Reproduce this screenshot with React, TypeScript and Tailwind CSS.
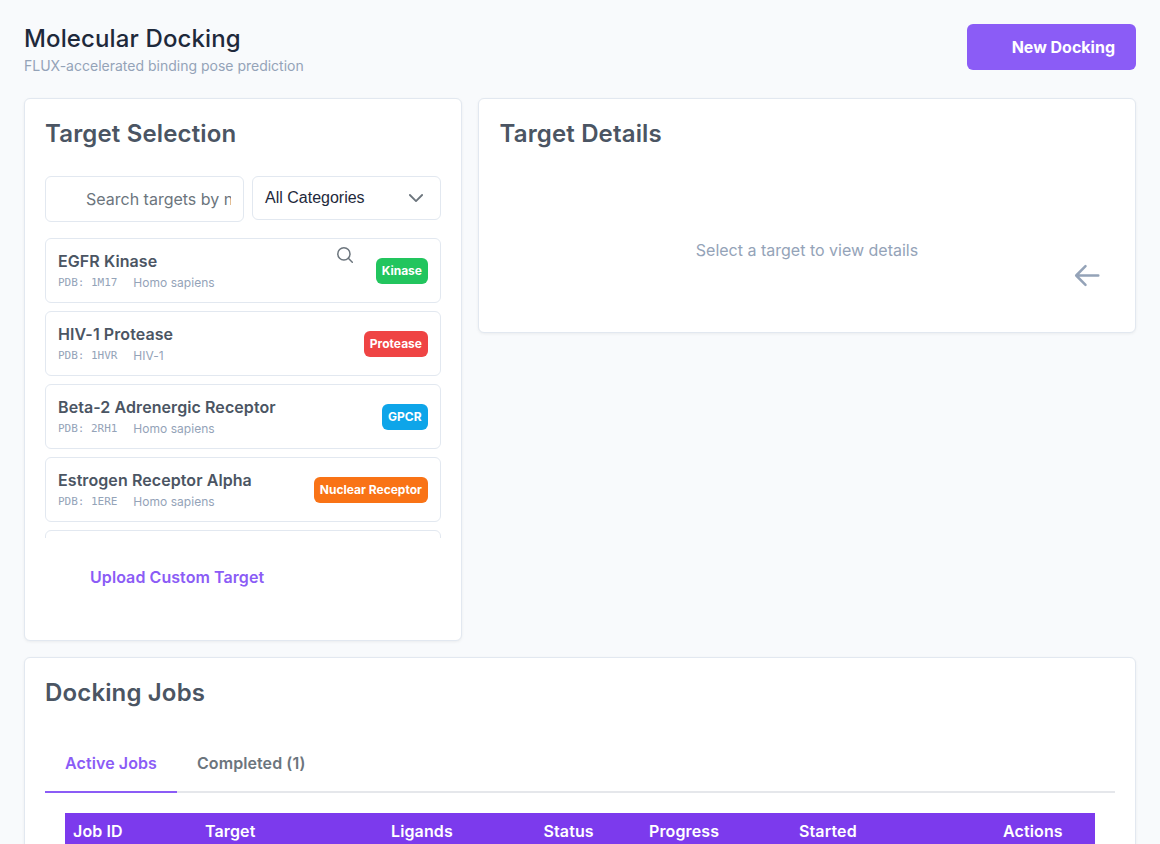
interface Target {
  name: string;
  pdb: string;
  organism: string;
  category: string;
  color: string;
}

interface Column {
  label: string;
  width: string;
}

const targets: Target[] = [
  { name: 'EGFR Kinase', pdb: '1M17', organism: 'Homo sapiens', category: 'Kinase', color: 'bg-[#22c55e]' },
  { name: 'HIV-1 Protease', pdb: '1HVR', organism: 'HIV-1', category: 'Protease', color: 'bg-[#ef4444]' },
  { name: 'Beta-2 Adrenergic Receptor', pdb: '2RH1', organism: 'Homo sapiens', category: 'GPCR', color: 'bg-[#0ea5e9]' },
  { name: 'Estrogen Receptor Alpha', pdb: '1ERE', organism: 'Homo sapiens', category: 'Nuclear Receptor', color: 'bg-[#f97316]' },
];

const columns: Column[] = [
  { label: 'Job ID', width: 'w-[132px]' },
  { label: 'Target', width: 'w-[186px]' },
  { label: 'Ligands', width: 'w-[152.5px]' },
  { label: 'Status', width: 'w-[105.5px]' },
  { label: 'Progress', width: 'w-[150px]' },
  { label: 'Started', width: 'w-[204px]' },
  { label: 'Actions', width: 'w-[100px]' },
];

const card = 'rounded-md border border-[#e2e8f0] bg-white shadow-[0_1px_3px_rgba(0,0,0,0.06)]';
const cardTitle = 'text-2xl leading-[29px] font-semibold tracking-[0.15px]';

function SearchIcon({ className }: { className?: string }) {
  return (
    <svg className={className} viewBox="0 0 16 16" fill="none" stroke="currentColor" strokeWidth="1.5" strokeLinecap="round" aria-hidden="true">
      <circle cx="6.9" cy="6.9" r="6.1" />
      <path d="M11.3 11.3 15.3 15.3" />
    </svg>
  );
}

function ChevronDown({ className }: { className?: string }) {
  return (
    <svg className={className} viewBox="0 0 14 14" fill="none" stroke="currentColor" strokeWidth="1.8" strokeLinecap="round" strokeLinejoin="round" aria-hidden="true">
      <path d="M.9 4 7 10.1 13.1 4" />
    </svg>
  );
}

function ArrowLeft({ className }: { className?: string }) {
  return (
    <svg className={className} viewBox="0 0 26 24" fill="none" stroke="currentColor" strokeWidth="2.5" strokeLinecap="round" strokeLinejoin="round" aria-hidden="true">
      <path d="M24.3 11.5H2.5M11.5 2.2 2.2 11.5 11.5 20.8" />
    </svg>
  );
}

function TargetItem({ target }: { target: Target }) {
  return (
    <li className="flex h-[65px] shrink-0 items-center justify-between rounded-md border border-[#e2e8f0] px-3">
      <div>
        <div className="-mt-px mb-px text-base leading-6 font-semibold tracking-[0.08px]">{target.name}</div>
        <div className="flex items-center gap-4 text-[#94a3b8]">
          <span className="font-['DejaVu_Sans_Mono',monospace] text-[11px] leading-[18px] tracking-[-0.03px]">PDB: {target.pdb}</span>
          <span className="text-xs leading-[18px] tracking-[0.03px]">{target.organism}</span>
        </div>
      </div>
      <span className={`flex h-[26px] min-w-[46px] items-center rounded-md px-1.5 text-xs font-bold tracking-[0.01px] text-white ${target.color}`}>
        {target.category}
      </span>
    </li>
  );
}

export default function App() {
  return (
    <div className="h-[844px] overflow-hidden bg-[#f8fafc] px-6 pt-6 font-['Inter',sans-serif] text-[#4b5563]">
      {/* Header */}
      <header className="mb-7 flex h-[46px] items-start justify-between">
        <div>
          <h1 className="text-2xl leading-[29px] font-medium tracking-[0.13px] text-[#1e293b]">Molecular Docking</h1>
          <p className="mt-1 text-sm leading-[18px] text-[#94a3b8]">FLUX-accelerated binding pose prediction</p>
        </div>
        <button className="h-[46px] w-[169px] rounded-md bg-[#8b5cf6] pr-[21px] text-right text-base font-bold text-white">
          New Docking
        </button>
      </header>

      <div className="flex items-start gap-4">
        {/* Target selection */}
        <section className={`relative h-[543px] w-[438px] px-5 pt-5 ${card}`}>
          <h2 className={cardTitle}>Target Selection</h2>
          <div className="mt-7 flex items-start gap-2">
            <input
              className="h-[46px] w-[199px] rounded-md border border-[#e2e8f0] pr-3 pl-10 text-base placeholder:text-[#6c757d]"
              placeholder="Search targets by name or PDB ID"
            />
            <div className="flex h-11 w-[189px] items-center justify-between rounded-md border border-[#e2e8f0] pr-[17px] pl-3">
              <span className="font-['Liberation_Sans',Arial,sans-serif] text-base text-[#1e293b]">All Categories</span>
              <ChevronDown className="size-3.5 text-[#6c757d]" />
            </div>
          </div>
          <SearchIcon className="absolute top-[148px] left-[312px] size-4 text-[#6c757d]" />
          <ul className="mt-4 flex h-[300px] flex-col gap-2 overflow-hidden">
            {targets.map((target) => (
              <TargetItem key={target.name} target={target} />
            ))}
            <li className="h-[65px] shrink-0 rounded-md border border-[#e2e8f0]" />
          </ul>
          <button className="mt-[27px] ml-[45px] block text-base leading-6 font-semibold tracking-[0.07px] text-[#8b5cf6]">
            Upload Custom Target
          </button>
        </section>

        {/* Target details */}
        <section className={`relative h-[235px] flex-1 px-[20.5px] pt-5 ${card}`}>
          <h2 className={cardTitle}>Target Details</h2>
          <p className="mt-[90px] text-center text-base leading-6 text-[#94a3b8]">Select a target to view details</p>
          <ArrowLeft className="absolute top-[165px] right-[35px] h-6 w-[26px] text-[#94a3b8]" />
        </section>
      </div>

      {/* Jobs */}
      <section className={`mt-4 h-[400px] px-5 pt-5 ${card}`}>
        <h2 className={cardTitle}>Docking Jobs</h2>
        <div className="mt-7 flex h-[58px] border-b-2 border-[#e5e7eb] font-semibold tracking-[0.08px]">
          <button className="-mb-0.5 w-[132px] border-b-2 border-[#8b5cf6] text-[#8b5cf6]">Active Jobs</button>
          <button className="-mb-0.5 border-b-2 border-transparent px-5 text-[#6c757d]">Completed (1)</button>
        </div>
        <div className="px-5 pt-5">
          <table className="w-full table-fixed text-left">
            <thead className="bg-[#7c3aed] text-white">
              <tr>
                {columns.map((column) => (
                  <th key={column.label} className={`h-10 px-2 pb-1 font-semibold tracking-[0.12px] ${column.width}`}>
                    {column.label}
                  </th>
                ))}
              </tr>
            </thead>
          </table>
        </div>
      </section>
    </div>
  );
}
